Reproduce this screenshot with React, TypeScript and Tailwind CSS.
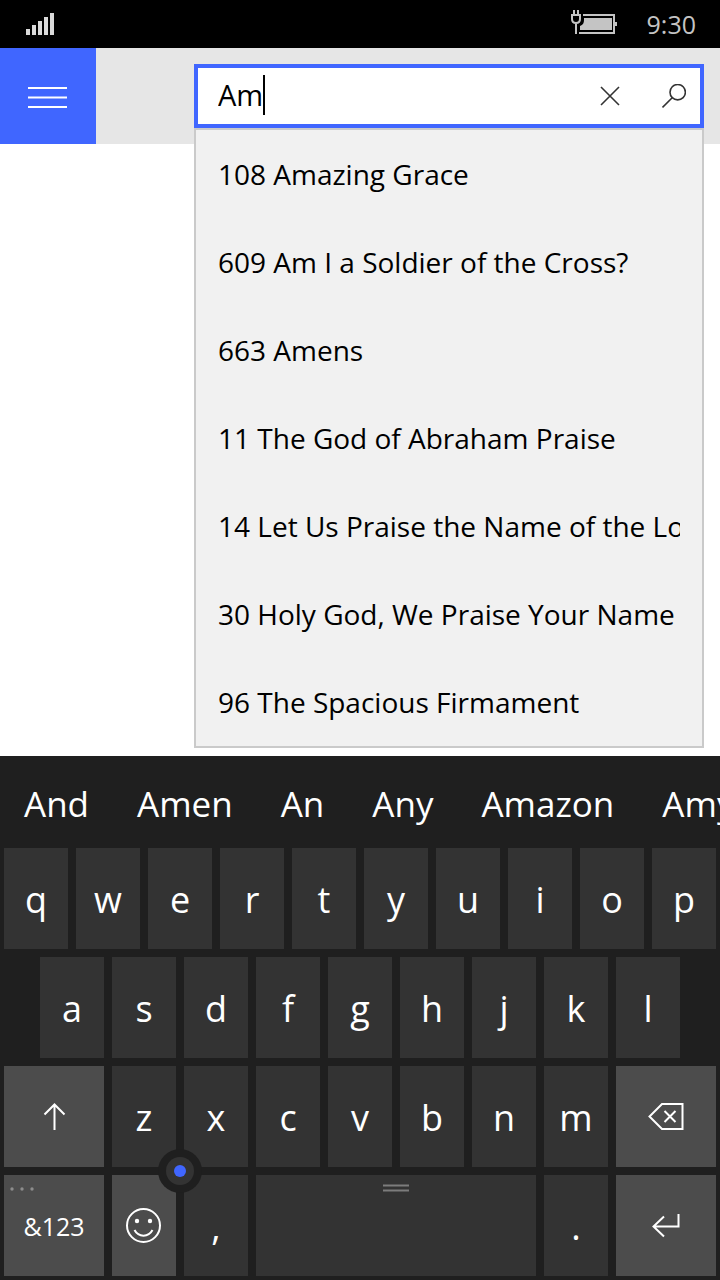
import React, { useState } from "react";

const songs = [
  "108 Amazing Grace",
  "609 Am I a Soldier of the Cross?",
  "663 Amens",
  "11 The God of Abraham Praise",
  "14 Let Us Praise the Name of the Lord",
  "30 Holy God, We Praise Your Name",
  "96 The Spacious Firmament",
];

const words = ["And", "Amen", "An", "Any", "Amazon", "Amy"];

function StatusBar() {
  return (
    <div className="flex h-12 items-center bg-black pl-[26px] pr-6 text-[#c4c4c4]">
      <svg className="h-6 w-7" viewBox="0 0 28 24" fill="#dadada" role="img" aria-label="Signal">
        <path d="M0 17h4v6h-4zM6 13h4v10h-4zM12 9h4v14h-4zM18 5h4v18h-4zM24 1h4v22h-4z" />
      </svg>
      <svg className="ml-auto h-7 w-12" viewBox="0 0 48 28" fill="none" role="img" aria-label="Charging">
        <path d="M12 5h31v18H8" stroke="#c4c4c4" strokeWidth="2" />
        <path d="M44 12h2v4h-2zM13 8h28v12H9v-4c3-1 4-3 4-6z" fill="#c4c4c4" />
        <path d="M3 0v4M7 0v4M0 5h10M1 5v4c0 2.500 1.500 4 4 4s4-1.500 4-4V5M5 13v11" stroke="#c4c4c4" strokeWidth="2" />
      </svg>
      <span className="ml-7 text-[25px] leading-8">9:30</span>
    </div>
  );
}

function SearchBox() {
  const [query, setQuery] = useState("Am");

  return (
    <form className="relative ml-[98px] mr-4 flex h-16 min-w-0 flex-1 items-center border-4 border-[#4066ff] bg-white" onSubmit={(e) => e.preventDefault()}>
      <label className="flex min-w-0 flex-1 items-center pb-0.5 pl-5">
        <input
          className="field-sizing-content h-10 min-w-0 text-[29px] leading-10 text-black caret-transparent outline-none"
          type="text"
          aria-label="Search songs"
          value={query}
          onChange={(e) => setQuery(e.target.value)}
        />
        <span className="h-10 w-0.5 shrink-0 bg-black" />
      </label>
      <div className="flex gap-3 text-[#333]">
        <button type="button" aria-label="Clear" className="flex h-14 w-[52px] items-center justify-center" onClick={() => setQuery("")}>
          <svg className="h-5 w-5" viewBox="0 0 20 20" fill="none" stroke="currentColor" strokeWidth="1.600">
            <path d="M1 1l18 18M19 1L1 19" />
          </svg>
        </button>
        <button type="submit" aria-label="Search" className="flex h-14 w-[52px] items-center justify-center">
          <svg className="h-6 w-6" viewBox="0 0 24 24" fill="none" stroke="currentColor" strokeWidth="1.600">
            <circle cx="15.700" cy="8.200" r="7.700" />
            <path d="M10.200 13.700L.5 23.400" />
          </svg>
        </button>
      </div>

      {/* Suggestions */}
      <ul className="absolute -left-1 -right-1 top-15 z-10 border-2 border-[#cacaca] bg-[#f1f1f1]">
        {songs.map((song) => (
          <li key={song}>
            <button type="button" className="flex h-22 w-full items-center px-[22px] text-left text-[28px] leading-10 text-black">
              <span className="min-w-0 flex-1 overflow-hidden whitespace-nowrap">{song}</span>
            </button>
          </li>
        ))}
      </ul>
    </form>
  );
}

function Letters({ keys }: { keys: string }) {
  return (
    <>
      {keys.split("").map((k) => (
        <button key={k} type="button" className="min-w-0 flex-64 bg-[#333] pt-0.5 text-4xl leading-[48px]">
          {k}
        </button>
      ))}
    </>
  );
}

function Keyboard() {
  return (
    <div className="bg-[#1f1f1f] pb-1 text-white">
      <div className="flex h-[92px] items-center gap-12 overflow-hidden pl-6 pt-1">
        {words.map((word) => (
          <button key={word} type="button" className="shrink-0 text-[35px] leading-[48px]">
            {word}
          </button>
        ))}
      </div>

      <div className="flex flex-col gap-2">
        <div className="flex h-[101px] gap-2 px-1">
          <Letters keys="qwertyuiop" />
        </div>
        <div className="flex h-[101px] gap-2 px-10">
          <Letters keys="asdfghjkl" />
        </div>
        <div className="flex h-[101px] gap-2 px-1">
          <button type="button" aria-label="Shift" className="flex flex-100 items-center justify-center bg-[#4c4c4c]">
            <svg className="h-7 w-6" viewBox="0 0 24 28" fill="none" stroke="currentColor" strokeWidth="2">
              <path d="M12.500 27V1.500M2.500 11.500l10-10 10 10" />
            </svg>
          </button>
          <Letters keys="zxcvbnm" />
          <button type="button" aria-label="Backspace" className="flex flex-100 items-center justify-center bg-[#4c4c4c]">
            <svg className="h-7 w-9" viewBox="0 0 36 28" fill="none" stroke="currentColor" strokeWidth="2">
              <path d="M14 1h20.500v25H14L1.500 13.500zM16.500 8l11 11M27.500 8l-11 11" />
            </svg>
          </button>
        </div>
        <div className="relative flex h-[101px] gap-2 px-1">
          <button type="button" className="relative min-w-0 flex-100 bg-[#4c4c4c] text-[25px] leading-8">
            <svg className="absolute left-1.5 top-3 h-1 w-6" viewBox="0 0 24 4" fill="#8c8c8c">
              <circle cx="2" cy="2" r="1.700" />
              <circle cx="12" cy="2" r="1.700" />
              <circle cx="22" cy="2" r="1.700" />
            </svg>
            &amp;123
          </button>
          <button type="button" aria-label="Emoji" className="flex flex-64 items-center justify-center bg-[#4c4c4c]">
            <svg className="h-9 w-9" viewBox="0 0 36 36" fill="none" stroke="currentColor" strokeWidth="2">
              <circle cx="17.500" cy="17.500" r="16.500" />
              <path d="M8.500 22c4 7.500 14 7.500 18 0" />
              <circle cx="11" cy="13" r="2.200" fill="currentColor" stroke="none" />
              <circle cx="24" cy="13" r="2.200" fill="currentColor" stroke="none" />
            </svg>
          </button>
          <Letters keys="," />
          <button type="button" aria-label="Space" className="flex flex-280 items-start justify-center bg-[#333] pt-[9px]">
            <svg className="h-2 w-[26px]" viewBox="0 0 26 8" stroke="#7c7c7c" strokeWidth="2">
              <path d="M0 1.500h26M0 6.500h26" />
            </svg>
          </button>
          <Letters keys="." />
          <button type="button" aria-label="Enter" className="flex flex-100 items-center justify-center bg-[#4c4c4c]">
            <svg className="h-6 w-7" viewBox="0 0 28 24" fill="none" stroke="currentColor" strokeWidth="2">
              <path d="M26.500 0v12.500H1.500M12 2.500l-10.500 10 10.500 10" />
            </svg>
          </button>

          {/* Cursor stick */}
          <div className="absolute -top-1 left-1/4 flex h-11 w-11 -translate-x-1/2 -translate-y-1/2 items-center justify-center rounded-full bg-[#1f1f1f]">
            <div className="flex h-7 w-7 items-center justify-center rounded-full bg-[#333]">
              <div className="h-3 w-3 rounded-full bg-[#4066ff]" />
            </div>
          </div>
        </div>
      </div>
    </div>
  );
}

export default function App() {
  return (
    <div className="flex min-h-screen flex-col bg-white font-['Open_Sans','Noto_Sans',sans-serif]">
      <StatusBar />
      <header className="flex h-24 items-center bg-[#e6e6e6]">
        <button type="button" aria-label="Menu" className="flex h-24 w-24 items-center justify-center bg-[#4066ff]">
          <svg className="h-6 w-10" viewBox="0 0 40 24" stroke="#fff" strokeWidth="2">
            <path d="M0 4h39M0 13.500h39M0 23h39" />
          </svg>
        </button>
        <SearchBox />
      </header>
      <main className="flex-1" />
      <Keyboard />
    </div>
  );
}
